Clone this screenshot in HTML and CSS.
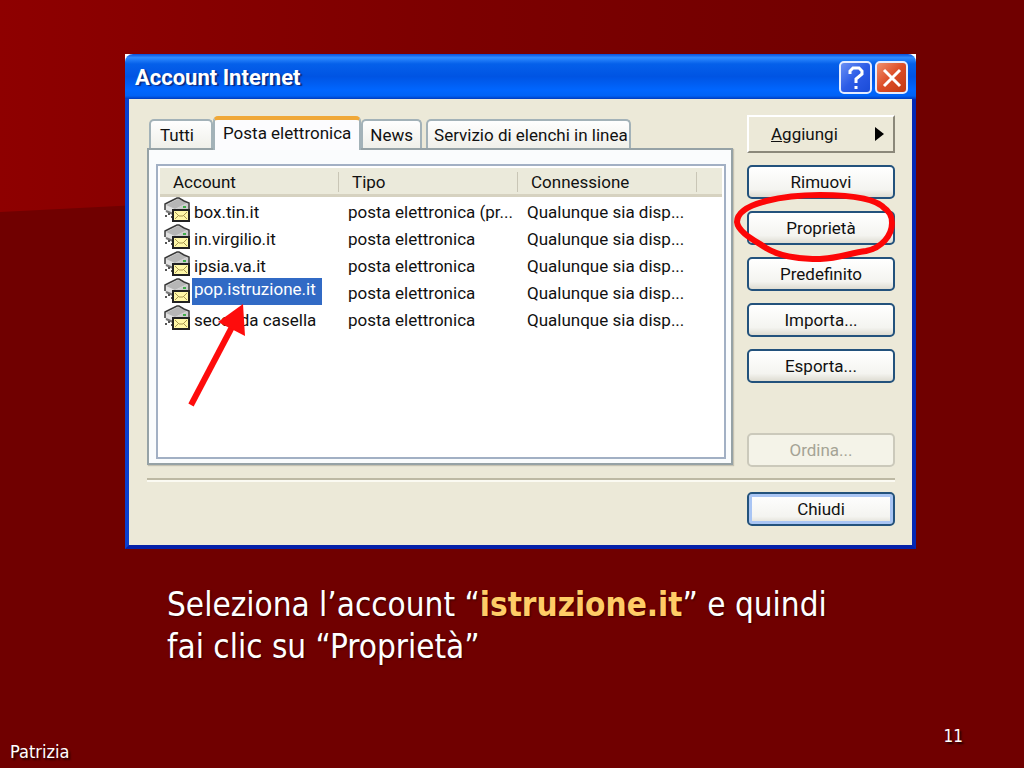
FILE: index.html
```html
<!doctype html>
<html lang="it">
<head>
    <meta charset="utf-8">
    <title>Account Internet</title>
    <link rel="stylesheet" href="styles.css">
</head>
<body>
    <!-- icon shared by all the account rows -->
    <svg class="defs" width="0" height="0">
        <symbol id="mail-account" viewBox="0 0 26 25">
            <path d="M1 7 L13 1 H15 L25 6 V14 H9 V17 L1 14 Z" fill="#e2e2e2"/>
            <path d="M2 8 L14 2 L23 6 L11 12 Z" fill="#b6b6b6"/>
            <path d="M11 12 L24 6 V13 H11 Z" fill="#cdcdcd"/>
            <path d="M1 13 V7 L7 4 L13 1 H15 L20 4 L25 6 V13" fill="none" stroke="#3a3a3a" stroke-width="1.5"/>
            <path d="M2 14 L9 17" stroke="#777" stroke-width="2"/>
            <path d="M19 10 h3" stroke="#3fae4a" stroke-width="2"/>
            <path d="M1 19 h2 M4 17 h2 M7 20 h2" stroke="#555" stroke-width="2"/>
            <rect x="9" y="13" width="16" height="11" fill="#fff8a8" stroke="#222" stroke-width="2"/>
            <path d="M11 15 L15 19 H19 L23 15 M11 22 L14 19 M23 22 L20 19" fill="none" stroke="#a89650"/>
        </symbol>
    </svg>

    <main class="slide">
        <section class="dialog">
            <header class="titlebar">
                <h1>Account Internet</h1>
                <button class="title-button help" aria-label="Guida">
                    <svg width="18" height="24" viewBox="0 0 18 24"><path d="M3 8 V5 L6 2 H12 L15 5 V8 L9 13 V17 M9 20 V23" fill="none" stroke="#fff" stroke-width="3"/></svg>
                </button>
                <button class="title-button close" aria-label="Chiudi finestra">
                    <svg width="20" height="20" viewBox="0 0 20 20"><path d="M2 2 L18 18 M18 2 L2 18" stroke="#fff" stroke-width="3"/></svg>
                </button>
            </header>

            <div class="content">
                <div class="main">
                    <div class="left">
                        <div class="tabs" role="tablist">
                            <button class="tab first" role="tab">Tutti</button>
                            <button class="tab selected" role="tab" aria-selected="true">Posta elettronica</button>
                            <button class="tab" role="tab">News</button>
                            <button class="tab last" role="tab">Servizio di elenchi in linea</button>
                        </div>
                        <div class="panel">
                            <div class="list">
                                <table>
                                    <colgroup>
                                        <col class="col-account">
                                        <col class="col-type">
                                        <col class="col-connection">
                                        <col>
                                    </colgroup>
                                    <thead>
                                        <tr><th>Account</th><th>Tipo</th><th>Connessione</th><td></td></tr>
                                    </thead>
                                    <tbody>
                                        <tr>
                                            <td class="name"><svg class="icon"><use href="#mail-account"/></svg><span>box.tin.it</span></td>
                                            <td>posta elettronica (pr...</td>
                                            <td>Qualunque sia disp...</td>
                                            <td></td>
                                        </tr>
                                        <tr>
                                            <td class="name"><svg class="icon"><use href="#mail-account"/></svg><span>in.virgilio.it</span></td>
                                            <td>posta elettronica</td>
                                            <td>Qualunque sia disp...</td>
                                            <td></td>
                                        </tr>
                                        <tr>
                                            <td class="name"><svg class="icon"><use href="#mail-account"/></svg><span>ipsia.va.it</span></td>
                                            <td>posta elettronica</td>
                                            <td>Qualunque sia disp...</td>
                                            <td></td>
                                        </tr>
                                        <tr class="current">
                                            <td class="name"><svg class="icon"><use href="#mail-account"/></svg><span>pop.istruzione.it</span></td>
                                            <td>posta elettronica</td>
                                            <td>Qualunque sia disp...</td>
                                            <td></td>
                                        </tr>
                                        <tr>
                                            <td class="name"><svg class="icon"><use href="#mail-account"/></svg><span>seconda casella</span></td>
                                            <td>posta elettronica</td>
                                            <td>Qualunque sia disp...</td>
                                            <td></td>
                                        </tr>
                                    </tbody>
                                </table>
                                <svg class="arrow" width="64" height="106" viewBox="0 0 64 106">
                                    <path d="M5 102 L46 24" stroke="#fe0c0c" stroke-width="6"/>
                                    <path d="M57 1 L32 19 L59 33 Z" fill="#fe0c0c"/>
                                </svg>
                            </div>
                        </div>
                    </div>

                    <div class="actions">
                        <button class="add"><span><u>A</u>ggiungi</span><svg width="9" height="14" viewBox="0 0 9 14"><path d="M0 0 L9 7 L0 14 Z"/></svg></button>
                        <button class="button">Rimuovi</button>
                        <div class="marked">
                            <button class="button">Proprietà</button>
                            <svg class="circle" width="165" height="75" viewBox="0 0 165 75">
                                <path d="M153 19 C146 10 125 5 88 5 C55 5 5 12 5 32 C6 42 22 50 34 58 C47 66 67 69 88 69 C108 68 118 63 134 61 C150 58 160 45 160 33 C160 25 157 21 151 17" fill="none" stroke="#fd0606" stroke-width="6"/>
                            </svg>
                        </div>
                        <button class="button">Predefinito</button>
                        <button class="button">Importa...</button>
                        <button class="button">Esporta...</button>
                        <button class="button sort" disabled>Ordina...</button>
                    </div>
                </div>

                <div class="bottom">
                    <button class="button default">Chiudi</button>
                </div>
            </div>
        </section>

        <p class="caption">Seleziona l’account “<strong>istruzione.it</strong>” e quindi<br>fai clic su “Proprietà”</p>

        <footer class="footer">
            <span class="author">Patrizia</span>
            <span class="number">11</span>
        </footer>
    </main>
</body>
</html>
```
FILE: styles.css
```css
* {
    box-sizing: border-box;
}
body {
    margin: 0;
    background-color: #700000;
    font-family: "DejaVu Sans Condensed", "DejaVu Sans", sans-serif;
    color: #fff;
}
button {
    font: inherit;
    color: #111;
    padding: 0;
}
.defs {
    position: absolute;
}
.slide {
    position: relative;
    display: flex;
    flex-direction: column;
    min-height: 100vh;
    padding: 54px 108px 0 125px;
}
/* lighter band of the slide background */
.slide::before {
    content: "";
    position: absolute;
    top: 0;
    left: 0;
    right: 0;
    height: 212px;
    background: linear-gradient(to right, #8e0000, #7c0000 45%, #700000 90%);
    clip-path: polygon(0 0, 100% 0, 100% 160px, 0 212px);
}

/* dialog */
.dialog {
    position: relative;
    background-color: #fff;
    font-family: Roboto, "Liberation Sans", sans-serif;
    font-size: 17px;
    line-height: 22px;
    color: #111;
}
.titlebar {
    display: flex;
    align-items: center;
    gap: 3px;
    height: 45px;
    padding: 2px 8px 0 10px;
    border-radius: 8px 8px 0 0;
    background: linear-gradient(#0a4fd8, #2f8bff 8%, #0560ea 22%, #0054e3 50%, #0066ff 80%, #0062f5 93%, #003bbd);
}
.titlebar h1 {
    flex: 1;
    margin: 0;
    font-size: 22px;
    font-weight: bold;
    color: #fff;
    text-shadow: 2px 1px 1px #0a2a80;
}
.title-button {
    display: flex;
    align-items: center;
    justify-content: center;
    width: 33px;
    height: 33px;
    border: 2px solid #e4ecff;
    border-radius: 5px;
}
.help {
    background: linear-gradient(135deg, #6a90f5, #2c5be6 50%, #1a4bd8);
}
.close {
    background: linear-gradient(135deg, #f0906e, #dc4c26 50%, #c23a14);
}
.content {
    padding: 16px 17px 19px 18px;
    border: 4px solid #0a3fd0;
    border-top: 0;
    border-right-color: #0428b4;
    border-bottom-color: #0420a8;
    background-color: #ece9d8;
}
.main {
    display: flex;
    gap: 14px;
}
.left {
    flex: 1;
    display: flex;
    flex-direction: column;
    padding-bottom: 2px;
}

/* tabs */
.tabs {
    display: flex;
    align-items: flex-end;
    height: 33px;
    padding-left: 2px;
}
.tab {
    height: 29px;
    padding: 0 7px;
    border: 2px solid #a3b2b8;
    border-bottom: 0;
    border-radius: 5px 5px 0 0;
    background: linear-gradient(#fefefe, #f0f0ea);
    white-space: nowrap;
}
.tab.first {
    padding: 0 17px 0 9px;
}
.tab.selected {
    height: 34px;
    margin-bottom: -2px;
    padding: 0 8px 4px;
    border-top: 4px solid #f0a838;
    background: #fcfcfe;
    position: relative;
}
.tab.last {
    margin-left: 4px;
    padding: 0 1px 0 6px;
}
.panel {
    flex: 1;
    display: flex;
    padding: 14px 5px 4px 7px;
    border: 2px solid #96a2a6;
    background-color: #fafcfd;
    box-shadow: 1px 1px 1px #c5c2b2;
}

/* account list */
.list {
    position: relative;
    flex: 1;
    padding: 2px 2px 0;
    border: 2px solid #a2b0c4;
    background-color: #fff;
}
table {
    width: 100%;
    table-layout: fixed;
    border-spacing: 0;
}
.col-account, .col-type, .col-connection {
    width: 179px;
}
th, td {
    height: 27px;
    padding: 4px 0 0 9px;
    text-align: left;
    vertical-align: top;
    white-space: nowrap;
}
thead th, thead td {
    height: 29px;
    padding: 3px 0 0 13px;
    font-weight: normal;
    border-bottom: 3px solid #d6d2c0;
    background: linear-gradient(#c9c6b6, #c9c6b6) right 4px / 1px 20px no-repeat #ebeadb;
}
thead td {
    background: #ebeadb;
}
.name {
    display: flex;
    padding: 0 0 0 4px;
}
.icon {
    width: 26px;
    height: 25px;
}
.name span {
    margin-left: 2px;
    padding: 4px 2px 0;
}
.current .name span {
    flex: 0 0 130px;
    height: 27px;
    padding-top: 0;
    background-color: #316ac5;
    color: #fff;
}
.arrow {
    position: absolute;
    left: 28px;
    top: 137px;
}

/* buttons */
.actions {
    display: flex;
    flex-direction: column;
    gap: 12px;
    width: 148px;
}
.add {
    display: flex;
    align-items: center;
    justify-content: space-between;
    height: 38px;
    padding: 0 9px 0 22px;
    border: 2px solid;
    border-color: #fff #8b887a #8b887a #fff;
    background-color: #ece9d8;
}
.button {
    width: 148px;
    height: 34px;
    border: 2px solid #23527c;
    border-radius: 5px;
    background: linear-gradient(#fff, #f4f4f0 75%, #dedcd2);
}
.button.default {
    box-shadow: inset 0 0 0 3px #a9c5f4;
}
.button:disabled {
    border-color: #cbc9bb;
    background: #f4f3e8;
    color: #a5a395;
}
.sort {
    margin-top: 38px;
}
.marked {
    position: relative;
    height: 34px;
}
.circle {
    position: absolute;
    left: -15px;
    top: -21px;
}
.bottom {
    display: flex;
    justify-content: flex-end;
    margin-top: 11px;
    padding-top: 12px;
    border-top: 2px solid #bdb9a4;
    box-shadow: inset 0 2px #fbfaf2;
}

/* slide texts */
.caption {
    position: relative;
    margin: 35px 0 0 42px;
    font-size: 33px;
    line-height: 42px;
    text-shadow: 1px 1px 2px #300;
}
.caption strong {
    color: #fc6;
}
.footer {
    position: relative;
    display: flex;
    justify-content: space-between;
    margin: auto -47px 0 -115px;
    padding-bottom: 4px;
    font-size: 18px;
    line-height: 24px;
    text-shadow: 2px 2px 2px #200;
}
.number {
    padding-bottom: 16px;
    font-size: 17px;
}
.author {
    align-self: flex-end;
}
```
